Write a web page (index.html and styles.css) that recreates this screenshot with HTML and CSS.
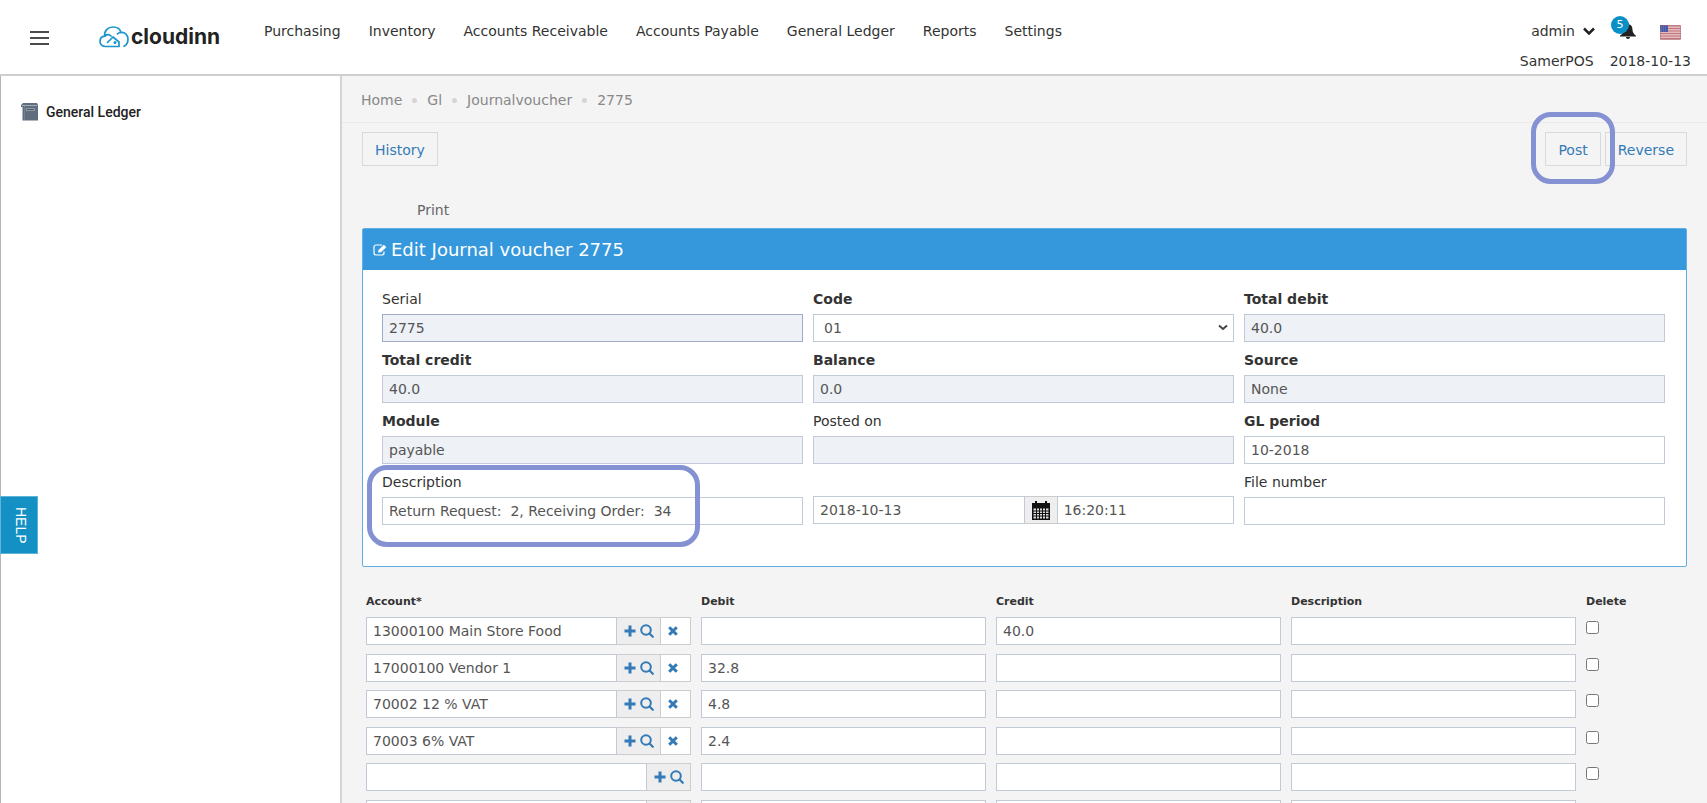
FILE: index.html
```html
<!DOCTYPE html>
<html lang="en">
<head>
    <meta charset="UTF-8">
    <meta name="viewport" content="width=device-width, initial-scale=1.0">
    <title>Edit Journal voucher 2775</title>
    <link rel="stylesheet" href="styles.css">
</head>
<body>
    <!-- shared icons -->
    <svg class="icon-defs" aria-hidden="true">
        <symbol id="icon-plus" viewBox="0 0 12 12">
            <path d="M4.5 0.5h3v4h4v3h-4v4h-3v-4h-4v-3h4z"/>
        </symbol>
        <symbol id="icon-search" viewBox="0 0 14 14">
            <circle cx="6" cy="6" r="4.8" fill="none" stroke="currentColor" stroke-width="2"/>
            <path d="M9.5 9.5L12.8 12.8" stroke="currentColor" stroke-width="2.2" stroke-linecap="round"/>
        </symbol>
        <symbol id="icon-remove" viewBox="0 0 10 10">
            <path d="M1.2 1.2L8.8 8.8M8.8 1.2L1.2 8.8" stroke="currentColor" stroke-width="3"/>
        </symbol>
    </svg>

    <header class="top-bar">
        <button class="menu-btn" type="button" aria-label="Menu"><span></span><span></span><span></span></button>
        <a href="#" class="logo">
            <svg class="logo-cloud" viewBox="0 0 30 22" fill="none" stroke="#1b95cb" stroke-width="1.7" stroke-linecap="round" stroke-linejoin="round">
                <path d="M8.500 16.500L14 11L20 16V20.500H6.500C3.500 20.500 1 18.500 1 15.500C1 12.500 3 10.500 5.800 10.200"/>
                <path d="M12 10C10 7.800 7.500 8.300 5.800 10.200C4.800 4.800 9 1 14 1C18.500 1 21.300 3.300 21.800 6.500C26 6 29 9 29 13C29 16.500 27.500 19 25 20.200"/>
                <path d="M21.800 6.500C20.300 6.500 19.300 7 18.500 7.800"/>
                <circle cx="16" cy="16.500" r="0.700" fill="#1b95cb"/>
            </svg>
            <span class="logo-name">cloudinn</span>
        </a>
        <nav class="main-nav">
            <a href="#">Purchasing</a>
            <a href="#">Inventory</a>
            <a href="#">Accounts Receivable</a>
            <a href="#">Accounts Payable</a>
            <a href="#">General Ledger</a>
            <a href="#">Reports</a>
            <a href="#">Settings</a>
        </nav>
        <div class="user-area">
            <div class="user-row">
                <a href="#" class="user-link">admin
                    <svg class="caret" viewBox="0 0 12 8"><path d="M1 1.500L6 6.500L11 1.500" fill="none" stroke="#222" stroke-width="2.500"/></svg>
                </a>
                <a href="#" class="bell" aria-label="Notifications">
                    <svg viewBox="0 0 16 16" fill="#222"><path d="M8 0C8.800 0 9 0.600 9 1.300C11.300 1.900 12.300 3.800 12.400 6C12.500 9.500 13.800 11 16 12.800V13.500H0V12.800C2.200 11 3.500 9.500 3.600 6C3.700 3.800 4.700 1.900 7 1.300C7 0.600 7.200 0 8 0ZM6 14H10C10 15.200 9.200 16 8 16C6.800 16 6 15.200 6 14Z"/></svg>
                    <span class="badge">5</span>
                </a>
                <a href="#" class="flag" aria-label="Language">
                    <svg viewBox="0 0 21 15">
                        <rect width="21" height="15" rx="1" fill="#e2bcbf"/>
                        <path d="M0 1H21M0 3.500H21M0 6H21M0 8.500H21M0 11H21M0 13.500H21" stroke="#c4757b" stroke-width="1.200"/>
                        <rect width="8" height="7" fill="#4759a8"/>
                        <path d="M1 2H7M1 4H7M1 6H7" stroke="#8b98cc" stroke-width="0.600" stroke-dasharray="1 1"/>
                        <rect x="0.500" y="0.500" width="20" height="14" rx="1" fill="none" stroke="#a66a78" stroke-opacity="0.500"/>
                    </svg>
                </a>
            </div>
            <div class="info-row">
                <span>SamerPOS</span>
                <span>2018-10-13</span>
            </div>
        </div>
    </header>

    <div class="page">
        <aside class="sidebar">
            <a href="#" class="side-link">
                <svg viewBox="0 0 17 18">
                    <path d="M2 0H16L17 2V17.500H1.500V4H0V2Z" fill="#5f6d7e"/>
                    <path d="M1 2.500H16" stroke="#a3adb8"/>
                    <path d="M3.500 3V17" stroke="#77859a" stroke-width="0.800"/>
                    <rect x="5" y="5" width="9" height="3" fill="#8f9aa7"/>
                    <path d="M6 6.500H13" stroke="#4a5766"/>
                </svg>
                General Ledger
            </a>
            <button class="help-btn" type="button">HELP</button>
        </aside>

        <main class="content">
            <ul class="breadcrumb">
                <li><a href="#">Home</a></li>
                <li><a href="#">Gl</a></li>
                <li><a href="#">Journalvoucher</a></li>
                <li>2775</li>
            </ul>

            <div class="toolbar">
                <button class="btn" type="button">History</button>
                <div class="toolbar-right">
                    <div class="mark-wrap">
                        <button class="btn" type="button">Post</button>
                        <span class="mark mark-post"></span>
                    </div>
                    <button class="btn" type="button">Reverse</button>
                </div>
            </div>

            <a href="#" class="print-link">Print</a>

            <section class="panel">
                <h1 class="panel-title">
                    <svg viewBox="0 0 14 12" fill="none" stroke="#fff">
                        <path d="M9 1H3C1.800 1 1 1.800 1 3V9C1 10.200 1.800 11 3 11H9C10.200 11 11 10.200 11 9V7.500" stroke-width="1.200"/>
                        <path d="M5 8.500L5.500 6L10.800 0.800L13.300 3.200L8 8.300Z" fill="#fff" stroke="none"/>
                    </svg>
                    Edit Journal voucher 2775
                </h1>
                <form class="panel-body">
                    <div class="field">
                        <label for="serial">Serial</label>
                        <input id="serial" class="serial" type="text" value="2775" readonly>
                    </div>
                    <div class="field required">
                        <label for="code">Code</label>
                        <div class="select-box">
                            <select id="code"><option>01</option></select>
                            <svg viewBox="0 0 10 7"><path d="M1 1.500L5 5L9 1.500" fill="none" stroke="#444" stroke-width="2"/></svg>
                        </div>
                    </div>
                    <div class="field required">
                        <label for="total-debit">Total debit</label>
                        <input id="total-debit" type="text" value="40.0" readonly>
                    </div>
                    <div class="field required">
                        <label for="total-credit">Total credit</label>
                        <input id="total-credit" type="text" value="40.0" readonly>
                    </div>
                    <div class="field required">
                        <label for="balance">Balance</label>
                        <input id="balance" type="text" value="0.0" readonly>
                    </div>
                    <div class="field required">
                        <label for="source">Source</label>
                        <input id="source" type="text" value="None" readonly>
                    </div>
                    <div class="field required">
                        <label for="module">Module</label>
                        <input id="module" type="text" value="payable" readonly>
                    </div>
                    <div class="field">
                        <label for="posted-on">Posted on</label>
                        <input id="posted-on" type="text" readonly>
                    </div>
                    <div class="field required">
                        <label for="gl-period">GL period</label>
                        <input id="gl-period" type="text" value="10-2018">
                    </div>
                    <div class="field mark-wrap">
                        <label for="description">Description</label>
                        <input id="description" type="text" value="Return Request:  2, Receiving Order:  34">
                        <span class="mark mark-description"></span>
                    </div>
                    <div class="date-time">
                        <input class="date" type="text" value="2018-10-13" aria-label="Date">
                        <button class="calendar-btn" type="button" aria-label="Pick a date">
                            <svg viewBox="0 0 18 19">
                                <path d="M0 2H18V19H0Z" fill="#111"/>
                                <path d="M3 0H5V3H3ZM13 0H15V3H13Z" fill="#111"/>
                                <path d="M1.500 7.500H16.500V17.500H1.500Z" fill="#ddd"/>
                                <path d="M4.500 7V18M7.500 7V18M10.500 7V18M13.500 7V18M1 10H17M1 12.500H17M1 15H17" stroke="#111"/>
                            </svg>
                        </button>
                        <input class="time" type="text" value="16:20:11" aria-label="Time">
                    </div>
                    <div class="field">
                        <label for="file-number">File number</label>
                        <input id="file-number" type="text">
                    </div>
                </form>
            </section>

            <table class="lines">
                <thead>
                    <tr>
                        <th class="col-account">Account*</th>
                        <th class="col-value">Debit</th>
                        <th class="col-value">Credit</th>
                        <th class="col-value">Description</th>
                        <th>Delete</th>
                    </tr>
                </thead>
                <tbody id="lines"></tbody>
            </table>
        </main>
    </div>

    <script src="script.js"></script>
</body>
</html>
```
FILE: styles.css
```css
:root {
    --text: #333;
    --link: #337ab7;
    --blue: #3598dc;
    --border: #c2cad8;
    --page: #f4f4f4;
    --mark: #8492d3;
}

* {
    box-sizing: border-box;
}

body {
    margin: 0;
    height: 100vh;
    display: flex;
    flex-direction: column;
    overflow: hidden;
    background: var(--page);
    color: var(--text);
    font-family: "DejaVu Sans", Verdana, sans-serif;
    font-size: 14px;
    line-height: 20px;
}

a {
    color: inherit;
    text-decoration: none;
}

button,
input,
select {
    font: inherit;
    color: inherit;
}

.icon-defs {
    display: none;
}

/* top bar */
.top-bar {
    flex: none;
    display: flex;
    align-items: flex-start;
    height: 76px;
    padding: 0 16px 0 30px;
    background: #fff;
    border-bottom: 2px solid #cfcfcf;
}

.menu-btn {
    display: flex;
    flex-direction: column;
    gap: 4px;
    width: 19px;
    margin-top: 31px;
    padding: 0;
    border: 0;
    background: none;
}

.menu-btn span {
    height: 2px;
    background: #4d4a4b;
}

.logo {
    display: flex;
    align-items: center;
    gap: 2px;
    width: 151px;
    margin: 25px 0 0 50px;
}

.logo-cloud {
    flex: none;
    width: 30px;
    height: 22px;
}

.logo-name {
    font-family: Inter, sans-serif;
    font-size: 21px;
    font-weight: 700;
    line-height: 24px;
    color: #222;
}

.main-nav {
    display: flex;
    gap: 28px;
    padding-top: 21px;
    padding-left: 14px;
}

.user-area {
    margin-left: auto;
    padding-top: 21px;
}

.user-row {
    display: flex;
    justify-content: flex-end;
    align-items: center;
    height: 20px;
    padding-right: 10px;
}

.user-link {
    display: flex;
    align-items: center;
    gap: 8px;
}

.caret {
    width: 12px;
    height: 8px;
}

.bell {
    position: relative;
    margin-left: 25px;
    height: 16px;
}

.bell svg {
    display: block;
    width: 16px;
    height: 16px;
}

.badge {
    position: absolute;
    top: -7px;
    left: -9px;
    width: 18px;
    height: 18px;
    border-radius: 50%;
    background: #0b8fc7;
    color: #fff;
    font-size: 11px;
    line-height: 17px;
    text-align: center;
}

.flag {
    margin-left: 24px;
    padding-top: 2px;
}

.flag svg {
    display: block;
    width: 21px;
    height: 15px;
}

.info-row {
    display: flex;
    justify-content: flex-end;
    gap: 16px;
    margin-top: 10px;
}

/* page */
.page {
    flex: 1;
    min-height: 0;
    display: flex;
}

.sidebar {
    position: relative;
    flex: none;
    width: 342px;
    padding: 26px 20px;
    background: #fff;
    border-left: 1px solid #b5b5b5;
    border-right: 2px solid #d4d4d4;
}

.side-link {
    display: flex;
    align-items: center;
    gap: 8px;
    font-family: Roboto, sans-serif;
    font-weight: 500;
    color: #222;
}

.side-link svg {
    width: 17px;
    height: 18px;
}

.help-btn {
    position: absolute;
    top: 420px;
    left: -1px;
    width: 38px;
    height: 58px;
    padding: 0 0 0 4px;
    border: 1px solid #5db4d8;
    background: #1590c4;
    color: #fff;
    font-family: "Liberation Sans", Arial, sans-serif;
    writing-mode: vertical-rl;
}

.content {
    flex: 1;
    min-width: 0;
}

.breadcrumb {
    display: flex;
    margin: 0;
    padding: 14px 19px 12px;
    list-style: none;
    border-bottom: 1px solid #eaeaea;
    color: #888;
}

.breadcrumb li {
    display: flex;
    align-items: center;
}

.breadcrumb li + li::before {
    content: "";
    width: 5px;
    height: 5px;
    margin: 0 10px;
    border-radius: 50%;
    background: #d5d5d5;
}

.toolbar {
    display: flex;
    justify-content: space-between;
    padding: 9px 20px 0;
}

.toolbar-right {
    display: flex;
    gap: 4px;
}

.btn {
    height: 34px;
    padding: 7px 12px 5px;
    border: 1px solid #d9d9d9;
    background: none;
    color: var(--link);
    cursor: pointer;
}

.btn:hover {
    background: #e9e9e9;
}

.print-link {
    display: block;
    width: max-content;
    margin: 34px 0 8px 75px;
    color: #666;
}

/* highlight frames over the form */
.mark-wrap {
    position: relative;
}

.mark {
    position: absolute;
    border: 5px solid var(--mark);
    border-radius: 20px;
    pointer-events: none;
}

.mark-post {
    inset: -20px -14px -18px;
}

.mark-description {
    top: -7px;
    left: -15px;
    width: 333px;
    height: 82px;
}

/* voucher panel */
.panel {
    margin: 0 20px;
    border: 1px solid #60aee4;
    border-radius: 2px;
    background: #fff;
}

.panel-title {
    display: flex;
    align-items: center;
    gap: 4px;
    height: 41px;
    margin: 0;
    padding: 0 10px;
    background: var(--blue);
    color: #fff;
    font-size: 18px;
    font-weight: 400;
}

.panel-title svg {
    width: 14px;
    height: 12px;
}

.panel-body {
    display: grid;
    grid-template-columns: repeat(3, 1fr);
    gap: 8px 10px;
    padding: 19px 21px 41px 19px;
}

.field label {
    display: block;
    margin-bottom: 5px;
}

.required label {
    font-weight: 700;
}

input[type="text"],
select {
    display: block;
    width: 100%;
    min-width: 0;
    height: 28px;
    padding: 0 6px;
    border: 1px solid var(--border);
    border-radius: 0;
    background: #fff;
    color: #555;
}

input[readonly] {
    background: #eef1f5;
}

input.serial {
    border-color: #9fabc8;
}

.select-box {
    position: relative;
}

select {
    appearance: none;
    padding-left: 10px;
}

.select-box svg {
    position: absolute;
    top: 10px;
    right: 6px;
    width: 10px;
    height: 7px;
    pointer-events: none;
}

.date-time {
    display: flex;
    padding-top: 24px;
}

.date-time .date {
    flex: 213;
}

.date-time .time {
    flex: 176;
}

.calendar-btn {
    flex: none;
    display: flex;
    align-items: center;
    justify-content: center;
    width: 32px;
    height: 28px;
    padding: 0;
    border: 1px solid #ccc;
    border-width: 1px 0;
    background: #eee;
}

.calendar-btn svg {
    width: 18px;
    height: 19px;
}

/* voucher lines */
.lines {
    width: calc(100% - 40px);
    margin: 25px 20px 0 19px;
    border-spacing: 0;
    table-layout: fixed;
}

.lines th {
    padding: 0 5px 1px;
    font-size: 11px;
    line-height: 20px;
    text-align: left;
}

.col-account {
    width: 335px;
}

.col-value {
    width: 295px;
}

.lines td {
    padding: 4px 5px;
    vertical-align: top;
}

.lines tr:nth-child(odd) td {
    padding-bottom: 5px;
}

.lines input[type="checkbox"] {
    display: block;
    width: 13px;
    height: 13px;
    margin: 4px 0 0;
}

.account {
    display: flex;
}

.account .lookup,
.account .remove {
    flex: none;
    display: flex;
    align-items: center;
    justify-content: center;
    height: 28px;
    padding: 0;
    border: 1px solid #ccc;
    border-left: 0;
    color: var(--link);
    fill: currentColor;
}

.account .lookup {
    gap: 4px;
    width: 44px;
    background: #eee;
}

.account .remove {
    width: 30px;
    padding-right: 5px;
    background: #fff;
}

.account .plus {
    width: 12px;
    height: 12px;
}

.account .search {
    width: 14px;
    height: 14px;
}

.account .cross {
    width: 10px;
    height: 10px;
}
```
FILE: script.js
```javascript
const lines = [
    { account: '13000100 Main Store Food', debit: '', credit: '40.0' },
    { account: '17000100 Vendor 1', debit: '32.8', credit: '' },
    { account: '70002 12 % VAT', debit: '4.8', credit: '' },
    { account: '70003 6% VAT', debit: '2.4', credit: '' },
    { account: '', debit: '', credit: '' },
    { account: '', debit: '', credit: '' }
];

function createLine(line) {
    const row = document.createElement('tr');
    const remove = line.account
        ? '<button class="remove" type="button" aria-label="Clear"><svg class="cross"><use href="#icon-remove"/></svg></button>'
        : '';
    row.innerHTML = `
        <td>
            <div class="account">
                <input type="text" value="${line.account}" aria-label="Account">
                <button class="lookup" type="button" aria-label="Find account">
                    <svg class="plus"><use href="#icon-plus"/></svg>
                    <svg class="search"><use href="#icon-search"/></svg>
                </button>
                ${remove}
            </div>
        </td>
        <td><input type="text" value="${line.debit}" aria-label="Debit"></td>
        <td><input type="text" value="${line.credit}" aria-label="Credit"></td>
        <td><input type="text" aria-label="Description"></td>
        <td><input type="checkbox" aria-label="Delete"></td>`;
    return row;
}

const body = document.getElementById('lines');
lines.forEach(line => body.appendChild(createLine(line)));
```
